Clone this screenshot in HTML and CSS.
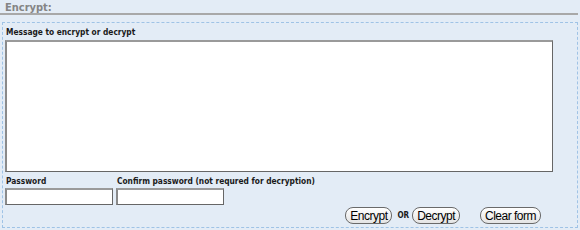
FILE: index.html
```html
<!DOCTYPE html>
<html lang="en">
<head>
  <meta charset="UTF-8" />
  <title>Encrypt</title>
  <link rel="stylesheet" href="styles.css">
</head>
<body>

  <h2 class="panel-title">Encrypt:</h2>

  <form class="crypt-form">
    <label class="field-label" for="message">Message to encrypt or decrypt</label>
    <textarea id="message" class="message"></textarea>

    <div class="password-row">
      <div class="field">
        <label class="field-label" for="pass">Password</label>
        <input type="password" id="pass" class="pass-input" />
      </div>
      <div class="field">
        <label class="field-label" for="pass2">Confirm password (not requred for decryption)</label>
        <input type="password" id="pass2" class="pass-input" />
      </div>
    </div>

    <div class="actions">
      <button type="button" class="btn">Encrypt</button>
      <span class="or">OR</span>
      <button type="button" class="btn">Decrypt</button>
      <button type="reset" class="btn btn-clear">Clear form</button>
    </div>
  </form>

</body>
</html>
```

FILE: styles.css
```css
/* Base */
* {
  box-sizing: border-box;
}

body {
  margin: 0;
  background: #e3ecf6;
  font-family: "DejaVu Sans Condensed", "DejaVu Sans", sans-serif;
  color: #1a1a1a;
}

.panel-title {
  margin: 0 2px 0 0;
  padding: 2px 5px 0;
  height: 15px;
  font-size: 11px;
  line-height: 11px;
  color: #858585;
  border-bottom: 2px solid #a8a8a8;
}

.crypt-form {
  margin: 7px 2px 0 2px;
  height: 206px;
  padding: 4px 2px 0;
  border: 1px dashed #9fc3e6;
}

.field-label {
  display: block;
  font-size: 8.3px;
  font-weight: bold;
  line-height: 11px;
  padding-left: 1px;
}

.message {
  display: block;
  width: 548px;
  height: 132px;
  margin-top: 2px;
  background: white;
  border: 1px solid #666;
  border-top: 2px solid #9a9a9a;
  border-left: 2px solid #8a8a8a;
  resize: none;
}

.password-row {
  display: flex;
  gap: 3px;
  margin-top: 4px;
}

.pass-input {
  display: block;
  width: 108px;
  height: 17px;
  margin-top: 1px;
  background: white;
  border: 1px solid #666;
  border-top: 2px solid #9a9a9a;
  border-left: 2px solid #8a8a8a;
}

.actions {
  display: flex;
  align-items: center;
  justify-content: flex-end;
  padding-right: 34px;
  margin-top: 2px;
}

.btn {
  height: 17px;
  padding: 0 4px;
  border: 1px solid #6a6a6a;
  border-radius: 8px;
  background: linear-gradient(#ffffff, #e4e4e4);
  font-family: "Liberation Sans", Arial, sans-serif;
  font-size: 12px;
  letter-spacing: -0.5px;
  color: #000;
  cursor: pointer;
}

.or {
  margin: 0 3px 0 5px;
  font-size: 8px;
  font-weight: bold;
}

.btn-clear {
  margin-left: 20px;
}
```
